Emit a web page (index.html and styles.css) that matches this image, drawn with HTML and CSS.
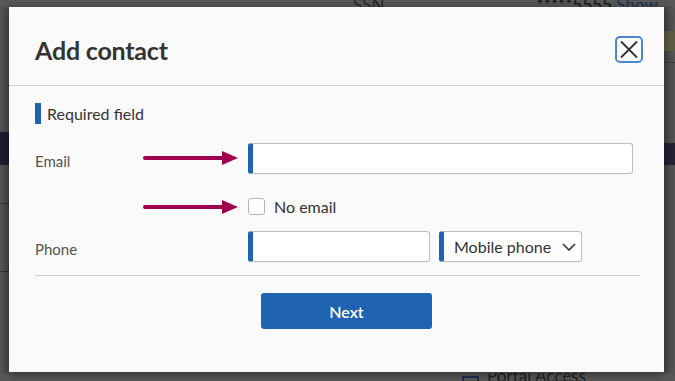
FILE: index.html
```html
<!DOCTYPE html>
<html>
<head>
<meta charset="utf-8">
<link rel="stylesheet" href="styles.css">
</head>
<body>
<div class="page">
  <div class="top-row">
    <span class="ssn">SSN</span>
    <span class="ssn-val">*****5555 <span class="show">Show</span></span>
  </div>
  <div class="cols">
    <div class="left-col">
      <div class="band-navy-l"></div>
      <div class="rule r1"></div>
      <div class="rule r2"></div>
    </div>
    <div class="right-col">
      <div class="band-olive"></div>
      <div class="rule r3"></div>
      <div class="band-navy-r"></div>
    </div>
  </div>
  <div class="bottom-row">
    <span class="portal-icon"></span>
    <span class="portal-text">Portal Access</span>
  </div>
</div>

<div class="modal">
  <div class="modal-header">
    <h1 class="title">Add contact</h1>
    <button class="close" aria-label="Close">
      <svg width="20" height="19" viewBox="0 0 20 19"><path d="M2 1.5 L18 17.5 M18 1.5 L2 17.5" stroke="#333" stroke-width="1.8" fill="none"/></svg>
    </button>
  </div>
  <div class="modal-body">
    <div class="required"><span class="req-bar"></span>Required field</div>
    <div class="form">
      <label class="label">Email</label>
      <div class="field-wrap">
        <svg class="arrow" width="96" height="16" viewBox="0 0 96 16"><path d="M2 8 H82" stroke="#a1004f" stroke-width="4" stroke-linecap="round"/><path d="M79 1 L95 8 L79 15 Z" fill="#a1004f"/></svg>
        <div class="input email"></div>
      </div>

      <div class="label spacer-check"></div>
      <div class="field-wrap check-row">
        <svg class="arrow" width="96" height="16" viewBox="0 0 96 16"><path d="M2 8 H82" stroke="#a1004f" stroke-width="4" stroke-linecap="round"/><path d="M79 1 L95 8 L79 15 Z" fill="#a1004f"/></svg>
        <span class="checkbox"></span>
        <span class="check-label">No email</span>
      </div>

      <label class="label phone-label">Phone</label>
      <div class="field-wrap phone-row">
        <div class="input phone"></div>
        <div class="input select"><span>Mobile phone</span>
          <svg width="14" height="8" viewBox="0 0 14 8"><path d="M1 1 L7 7 L13 1" stroke="#333" stroke-width="1.6" fill="none"/></svg>
        </div>
      </div>
    </div>
    <div class="sep"></div>
    <div class="footer"><button class="next">Next</button></div>
  </div>
</div>
</body>
</html>
```

FILE: styles.css
```css
html, body {
  margin: 0;
  padding: 0;
}
body {
  width: 675px;
  height: 381px;
  overflow: hidden;
  background: #585858;
  font-family: "Source Sans Pro", Lato, "Liberation Sans", sans-serif;
  position: relative;
}

/* dimmed page behind the modal */
.page {
  width: 675px;
  height: 381px;
  display: flex;
  flex-direction: column;
}
.top-row {
  height: 7px;
  overflow: hidden;
  display: flex;
  font-size: 17px;
  line-height: 10px;
  color: #1b1b1b;
}
.ssn {
  margin-left: 353px;
  color: #2a2a2a;
}
.ssn-val {
  margin-left: 152px;
  color: #111;
}
.show { color: #1e3552; }
.cols {
  flex: 1;
  display: flex;
  justify-content: space-between;
}
.left-col {
  width: 9px;
  display: flex;
  flex-direction: column;
  background: linear-gradient(to right, #565656, #4a4a4a);
}
.band-navy-l {
  margin-top: 125px;
  height: 33px;
  background: #1d1c2c;
}
.rule {
  height: 1px;
  background: #2e2e2e;
}
.r1 { margin-top: 38px; }
.r2 { margin-top: 67px; }
.right-col {
  width: 11px;
  display: flex;
  flex-direction: column;
  background: linear-gradient(to right, #454545, #575757);
}
.band-olive {
  margin-top: 24px;
  height: 20px;
  background: #5f5c44;
}
.r3 { margin-top: 11px; background: #3a3a3a; }
.band-navy-r {
  margin-top: 80px;
  height: 22px;
  background: #222233;
}
.bottom-row {
  height: 8px;
  display: flex;
  align-items: flex-start;
  padding-left: 462px;
  gap: 8px;
  overflow: hidden;
}
.portal-icon {
  width: 17px;
  height: 12px;
  margin-top: 3px;
  border: 2px solid #1f2c45;
  box-sizing: border-box;
}
.portal-text {
  font-size: 17px;
  line-height: 10px;
  color: #222;
  margin-top: -2px;
}

/* modal */
.modal {
  position: absolute;
  left: 9px;
  top: 7px;
  width: 655px;
  height: 365px;
  background: #fafafa;
  box-shadow: 0 2px 10px rgba(0, 0, 0, 0.45);
  display: flex;
  flex-direction: column;
}
.modal-header {
  height: 71px;
  padding: 7px 21px 0 26px;
  border-bottom: 1px solid #cfcfcf;
  display: flex;
  align-items: center;
  justify-content: space-between;
}
.title {
  margin: 0;
  font-size: 25px;
  font-weight: 700;
  color: #333;
  letter-spacing: -0.2px;
}
.close {
  width: 28px;
  height: 27px;
  padding: 0;
  border: 2px solid #4a87cf;
  border-radius: 5px;
  background: #fafafa;
  display: flex;
  align-items: center;
  justify-content: center;
  box-sizing: border-box;
}
.close svg { display: block; }

.modal-body {
  padding: 17px 24px 0 26px;
  display: flex;
  flex-direction: column;
}
.required {
  display: flex;
  align-items: center;
  height: 21px;
  font-size: 16px;
  color: #333;
}
.req-bar {
  width: 6px;
  height: 21px;
  background: #1f62b0;
  margin-right: 6px;
}
.form {
  margin-top: 19px;
  display: grid;
  grid-template-columns: 213px 1fr;
  align-items: center;
}
.label {
  font-size: 15px;
  color: #555;
  padding-top: 5px;
}
.spacer-check { margin-top: 24px; }
.phone-label { margin-top: 16px; }
.field-wrap {
  display: flex;
  align-items: center;
  position: relative;
}
.arrow {
  position: absolute;
  left: -105px;
  top: 50%;
  margin-top: -9px;
}
.input {
  height: 31px;
  box-sizing: border-box;
  background: #fff;
  border: 1px solid #bdbdbd;
  border-left: 5px solid #1f62b0;
  border-radius: 3px;
}
.email { width: 385px; }
.check-row {
  margin-top: 24px;
  height: 17px;
}
.check-row .arrow { margin-top: -8px; }
.checkbox {
  width: 17px;
  height: 17px;
  box-sizing: border-box;
  border: 1px solid #b5b5b5;
  border-radius: 3px;
  background: #fff;
}
.check-label {
  margin-left: 9px;
  font-size: 16px;
  color: #333;
}
.phone-row {
  margin-top: 16px;
  gap: 9px;
}
.phone { width: 182px; }
.select {
  width: 143px;
  display: flex;
  align-items: center;
  justify-content: space-between;
  padding: 0 5px 0 10px;
  font-size: 16px;
  color: #333;
}
.select svg { display: block; }
.sep {
  margin-top: 13px;
  height: 1px;
  background: #cccccc;
}
.footer {
  display: flex;
  padding-top: 17px;
  padding-left: 226px;
}
.next {
  width: 171px;
  height: 36px;
  border: none;
  border-radius: 3px;
  background: #1f63b1;
  color: #fff;
  font-family: inherit;
  font-size: 16px;
  font-weight: 600;
}
```
